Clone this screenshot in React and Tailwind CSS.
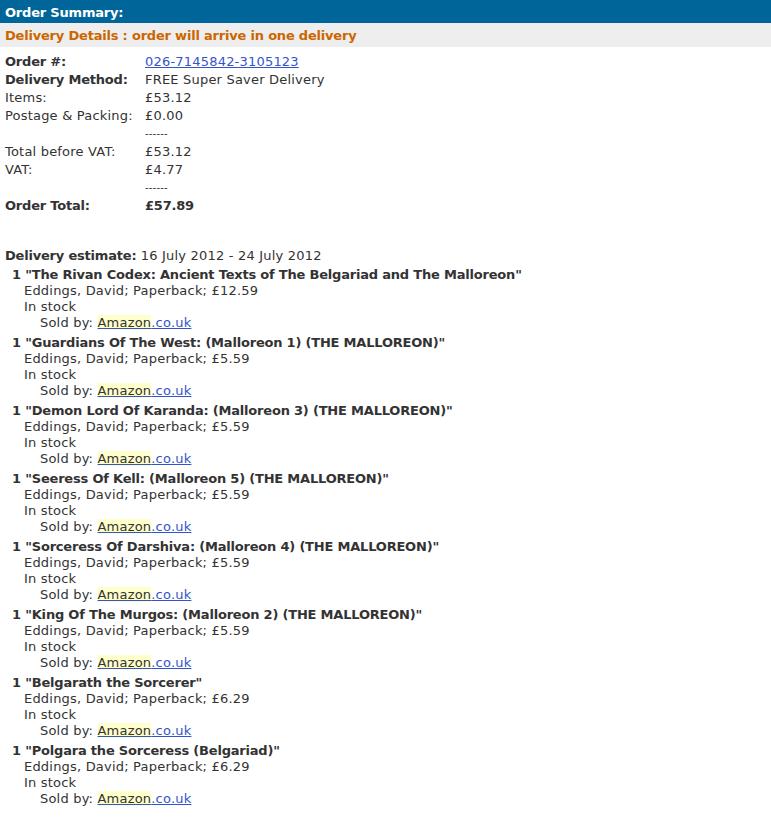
import React from 'react';

const items = [
  { title: 'The Rivan Codex: Ancient Texts of The Belgariad and The Malloreon', price: '£12.59' },
  { title: 'Guardians Of The West: (Malloreon 1) (THE MALLOREON)', price: '£5.59' },
  { title: 'Demon Lord Of Karanda: (Malloreon 3) (THE MALLOREON)', price: '£5.59' },
  { title: 'Seeress Of Kell: (Malloreon 5) (THE MALLOREON)', price: '£5.59' },
  { title: 'Sorceress Of Darshiva: (Malloreon 4) (THE MALLOREON)', price: '£5.59' },
  { title: 'King Of The Murgos: (Malloreon 2) (THE MALLOREON)', price: '£5.59' },
  { title: 'Belgarath the Sorcerer', price: '£6.29' },
  { title: 'Polgara the Sorceress (Belgariad)', price: '£6.29' },
];

const summary = [
  { label: 'Items:', value: '£53.12' },
  { label: 'Postage & Packing:', value: '£0.00' },
  { label: '', value: '------', dash: true },
  { label: 'Total before VAT:', value: '£53.12' },
  { label: 'VAT:', value: '£4.77' },
  { label: '', value: '------', dash: true },
];

const App = () => {
  return (
    <div className="min-h-screen bg-white text-[13px] tracking-[0.2px] text-[#333] font-['DejaVu_Sans',Verdana,sans-serif]">
      {/* Header */}
      <div className="bg-[#006699] h-[23px] px-[5px] pt-[1px] flex items-center">
        <h1 className="text-white font-bold tracking-[-0.2px] leading-none">Order Summary:</h1>
      </div>
      <div className="bg-[#eeeeee] h-[24px] px-[5px] flex items-center">
        <h2 className="text-[#cc6600] font-bold tracking-[-0.2px] leading-none">Delivery Details : order will arrive in one delivery</h2>
      </div>

      {/* Totals */}
      <div className="px-[5px] pt-[6px]">
        <div className="grid grid-cols-[140px_1fr] leading-[18px]">
          <span className="font-bold tracking-[-0.2px]">Order #:</span>
          <a href="#" className="text-[#3355cc] underline">026-7145842-3105123</a>
          <span className="font-bold tracking-[-0.2px]">Delivery Method:</span>
          <span>FREE Super Saver Delivery</span>
          {summary.map((row, i) => (
            <React.Fragment key={i}>
              <span>{row.label}</span>
              <span className={row.dash ? 'text-[10px]' : ''}>{row.value}</span>
            </React.Fragment>
          ))}
          <span className="font-bold tracking-[-0.2px]">Order Total:</span>
          <span className="font-bold tracking-[-0.2px]">£57.89</span>
        </div>

        {/* Shipment */}
        <div className="mt-[32px] leading-[18px]">
          <span className="font-bold tracking-[-0.2px]">Delivery estimate:</span> 16 July 2012 - 24 July 2012
        </div>
        <div className="leading-4">
          {items.map((item, i) => (
            <div key={i} className={i === 0 ? 'mt-[2px]' : 'mt-1'}>
              <div className="pl-[7px] font-bold tracking-[-0.2px]">1 "{item.title}"</div>
              <div className="pl-[19px]">Eddings, David; Paperback; {item.price}</div>
              <div className="pl-[19px]">In stock</div>
              <div className="pl-[35px]">
                Sold by:{' '}
                <a href="#" className="text-[#3355cc] underline">
                  <span className="bg-[#ffffcc] text-[#333]">Amazon</span>.co.uk
                </a>
              </div>
            </div>
          ))}
        </div>
      </div>
    </div>
  );
};

export default App;
